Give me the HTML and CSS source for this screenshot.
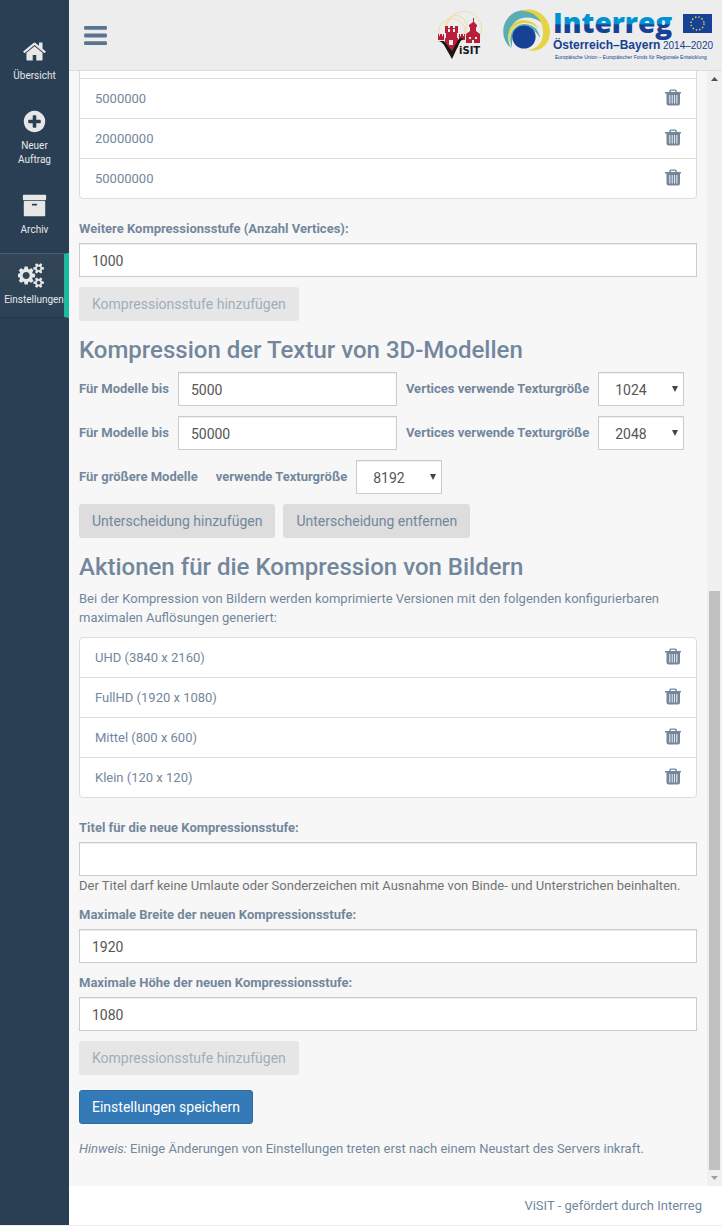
FILE: index.html
```html
<!DOCTYPE html>
<html lang="de">
<head>
<meta charset="utf-8">
<meta name="viewport" content="width=device-width, initial-scale=1">
<title>ViSIT - Einstellungen</title>
<link rel="stylesheet" href="styles.css">
</head>
<body>
<svg class="defs" aria-hidden="true">
  <symbol id="trash" viewBox="0 0 16 18">
    <path fill-rule="evenodd" d="M0 3h4L4.500 1.300Q4.800.4 5.800.4h4.400q1 0 1.300.9L12 3h4v1.600h-1V14.500q0 2-2 2H3.500q-2 0-2-2V4.600H0zM5.500 3h5L10 1.700H6zM4.400 6v8.500h.9V6zm2.400 0v8.500h.8V6zm2.300 0v8.500h.8V6zm2.300 0v8.500h.9V6z"/>
  </symbol>
</svg>
<div class="app">
  <nav class="sidebar">
    <a class="nav-item" href="#">
      <svg class="nav-icon" viewBox="0 0 1792 1792"><path d="M1472 992v480q0 26-19 45t-45 19h-384v-384h-256v384h-384q-26 0-45-19t-19-45v-480q0-1 .5-3t.5-3l575-474 575 474q1 2 1 6zm223-69l-62 74q-8 9-21 11h-3q-13 0-21-7l-692-577-692 577q-12 8-24 7-13-2-21-11l-62-74q-8-10-7-23.5t11-21.5l719-599q32-26 76-26t76 26l244 204v-195q0-14 9-23t23-9h192q14 0 23 9t9 23v408l219 182q10 8 11 21.5t-7 23.500z"/></svg>
      <span>Übersicht</span>
    </a>
    <a class="nav-item" href="#">
      <svg class="nav-icon" viewBox="0 0 1792 1792"><path d="M1344 960v-128q0-26-19-45t-45-19h-256v-256q0-26-19-45t-45-19h-128q-26 0-45 19t-19 45v256h-256q-26 0-45 19t-19 45v128q0 26 19 45t45 19h256v256q0 26 19 45t45 19h128q26 0 45-19t19-45v-256h256q26 0 45-19t19-45zm320-64q0 209-103 385.500t-279.500 279.500-385.500 103-385.500-103-279.500-279.500-103-385.500 103-385.500 279.500-279.500 385.500-103 385.500 103 279.500 279.500 103 385.500z"/></svg>
      <span>Neuer Auftrag</span>
    </a>
    <a class="nav-item" href="#">
      <svg class="nav-icon" viewBox="0 0 1792 1792"><path d="M1088 832q0-26-19-45t-45-19h-256q-26 0-45 19t-19 45 19 45 45 19h256q26 0 45-19t19-45zm576-192v960q0 26-19 45t-45 19h-1408q-26 0-45-19t-19-45v-960q0-26 19-45t45-19h1408q26 0 45 19t19 45zm64-448v256q0 26-19 45t-45 19h-1536q-26 0-45-19t-19-45v-256q0-26 19-45t45-19h1536q26 0 45 19t19 45z"/></svg>
      <span>Archiv</span>
    </a>
    <a class="nav-item active" href="#" aria-current="page">
      <svg class="nav-icon wide" viewBox="0 0 1920 1792"><path d="M832 896q0-106-75-181t-181-75-181 75-75 181 75 181 181 75 181-75 75-181zm768 512q0-52-38-90t-90-38-90 38-38 90q0 53 37.500 90.500t90.500 37.500 90.500-37.500 37.500-90.500zm0-1024q0-52-38-90t-90-38-90 38-38 90q0 53 37.500 90.500t90.500 37.500 90.500-37.500 37.500-90.500zm-384 421v185q0 10-7 19.500t-16 10.500l-155 24q-11 35-32 76 34 48 90 115 7 11 7 20 0 12-7 19-23 30-82.500 89.500t-78.500 59.500q-11 0-21-7l-115-90q-37 19-77 31-11 108-23 155-7 24-30 24h-186q-11 0-20-7.500t-10-17.500l-23-153q-34-10-75-31l-118 89q-7 7-20 7-11 0-21-8-144-133-144-160 0-9 7-19 10-14 41-53t47-61q-23-44-35-82l-152-24q-10-1-17-9.500t-7-19.500v-185q0-10 7-19.500t16-10.500l155-24q11-35 32-76-34-48-90-115-7-11-7-20 0-12 7-20 22-30 82-89t79-59q11 0 21 7l115 90q34-18 77-32 11-108 23-154 7-24 30-24h186q11 0 20 7.500t10 17.500l23 153q34 10 75 31l118-89q8-7 20-7 11 0 21 8 144 133 144 160 0 8-7 19-12 16-42 54t-45 60q23 48 34 82l152 23q10 2 17 10.500t7 19.500zm640 533v140q0 16-149 31-12 27-30 52 51 113 51 138 0 4-4 7-122 71-124 71-8 0-46-47t-52-68q-20 2-30 2t-30-2q-14 21-52 68t-46 47q-2 0-124-71-4-3-4-7 0-25 51-138-18-25-30-52-149-15-149-31v-140q0-16 149-31 13-29 30-52-51-113-51-138 0-4 4-7 4-2 35-20t59-34 30-16q8 0 46 46.500t52 67.500q20-2 30-2t30 2q51-71 92-112l6-2q4 0 124 70 4 3 4 7 0 25-51 138 17 23 30 52 149 15 149 31zm0-1024v140q0 16-149 31-12 27-30 52 51 113 51 138 0 4-4 7-122 71-124 71-8 0-46-47t-52-68q-20 2-30 2t-30-2q-14 21-52 68t-46 47q-2 0-124-71-4-3-4-7 0-25 51-138-18-25-30-52-149-15-149-31v-140q0-16 149-31 13-29 30-52-51-113-51-138 0-4 4-7 4-2 35-20t59-34 30-16q8 0 46 46.500t52 67.500q20-2 30-2t30 2q51-71 92-112l6-2q4 0 124 70 4 3 4 7 0 25-51 138 17 23 30 52 149 15 149 31z"/></svg>
      <span>Einstellungen</span>
    </a>
  </nav>

  <div class="page">
    <header class="topbar">
      <button class="menu-toggle" type="button" aria-label="Menü">
        <svg viewBox="0 0 1536 1280"><path d="M1536 1088v128q0 26-19 45t-45 19H64q-26 0-45-19t-19-45v-128q0-26 19-45t45-19h1408q26 0 45 19t19 45zm0-512v128q0 26-19 45t-45 19H64q-26 0-45-19T0 704V576q0-26 19-45t45-19h1408q26 0 45 19t19 45zm0-512v128q0 26-19 45t-45 19H64q-26 0-45-19T0 192V64q0-26 19-45T64 0h1408q26 0 45 19t19 45z"/></svg>
      </button>
      <div class="logos">
        <svg class="logo-visit" viewBox="0 0 50 54" role="img" aria-label="ViSIT">
          <g fill="none" stroke="#f0dda4" stroke-width="1">
            <circle cx="17" cy="24" r="13.500"/>
            <circle cx="29" cy="21" r="17.500"/>
            <circle cx="21" cy="18" r="10.500"/>
          </g>
          <path fill="#ededed" d="M2 34h46v20H2z"/>
          <path fill="#b81f3a" d="M10 18h3v2h2v-2h3v2h2v-2h3v7h-1v5h1v9l-6 5-7-6v-8h1v-5h-1z"/>
          <path fill="#b81f3a" d="M3 26h1v2h1v-2h2v2h1v-2h1v6H3zm21 0h1v2h1v-2h2v2h1v-2h1v6h-6z"/>
          <path fill="#b81f3a" d="M38 10h1v4l3 3v2h-1v4l4 3v9H31v-9l4-3v-4h-1v-2l4-3z"/>
          <path fill="#ededed" d="M13 21h2v3h-2zm5 0h2v3h-2zm-4 11h4v5h-4zm20-3h2v2h-2zm6 0h2v2h-2zm-3 3h2v3h-2z"/>
          <path fill="#161616" d="M3 33h6l8 10 6-11q1-2 6-2-3 2-5 6l-7 15-8-14q-3-4-6-4z"/>
          <text class="visit-word" x="24" y="46">iSIT</text>
        </svg>
        <svg class="logo-interreg" viewBox="0 0 211 54" role="img" aria-label="Interreg Österreich–Bayern 2014–2020">
          <defs>
            <linearGradient id="word" gradientUnits="userSpaceOnUse" x1="0" y1="4" x2="0" y2="32">
              <stop offset="0" stop-color="#0093d3"/><stop offset=".42" stop-color="#0093d3"/>
              <stop offset=".46" stop-color="#164194"/><stop offset="1" stop-color="#164194"/>
            </linearGradient>
          </defs>
          <path fill="#5badb4" d="M8 40C-3 31-2 14 9 6 20-2 38 3 42 19 36 9 21 6 12 14 5 21 3 31 8 40z"/>
          <path fill="#e5d343" d="M18 3C32-3 47 9 47 23 47 37 37 45 25 42 36 41 41 32 40 22 39 10 30 3 18 3z"/>
          <path fill="#e5d343" d="M9 40C2 28 6 13 20 12q12 0 17 11Q31 14 20 15C8 17 4 29 9 40z"/>
          <path fill="#5badb4" d="M9 40C4 26 11 16 22 16q13 1 15 14Q31 19 20 20 8 22 9 40z"/>
          <circle cx="21" cy="29" r="11.600" fill="#164194"/>
          <text class="ir-word" x="50" y="25" fill="url(#word)">Interreg</text>
          <path fill="#164194" d="M180 6h29v19h-29z"/>
          <circle cx="194.500" cy="15.500" r="6.500" fill="none" stroke="#d9cf45" stroke-width="1.500" stroke-dasharray="1.500 1.903"/>
          <text class="ir-region" x="50" y="41">Österreich–Bayern</text>
          <text class="ir-years" x="160" y="41">2014–2020</text>
          <text class="ir-sub" x="52" y="51">Europäische Union – Europäischer Fonds für Regionale Entwicklung</text>
        </svg>
      </div>
    </header>

    <div class="viewport">
      <main class="content">
        <ul class="list">
          <li></li>
          <li><span>5000000</span><button class="delete" type="button" aria-label="5000000 löschen"><svg><use href="#trash"/></svg></button></li>
          <li><span>20000000</span><button class="delete" type="button" aria-label="20000000 löschen"><svg><use href="#trash"/></svg></button></li>
          <li><span>50000000</span><button class="delete" type="button" aria-label="50000000 löschen"><svg><use href="#trash"/></svg></button></li>
        </ul>
        <div class="field">
          <label for="vertices">Weitere Kompressionsstufe (Anzahl Vertices):</label>
          <input class="control" id="vertices" type="text" value="1000">
        </div>
        <div class="actions"><button class="btn" type="button" disabled>Kompressionsstufe hinzufügen</button></div>

        <h2>Kompression der Textur von 3D-Modellen</h2>
        <div class="texture-row">
          <label for="m1">Für Modelle bis</label>
          <input class="control" id="m1" type="text" value="5000">
          <label for="t1">Vertices verwende Texturgröße</label>
          <div class="select"><select class="control" id="t1"><option>1024</option></select><svg viewBox="0 0 6 6"><path d="M0 0h6L3 6z"/></svg></div>
        </div>
        <div class="texture-row">
          <label for="m2">Für Modelle bis</label>
          <input class="control" id="m2" type="text" value="50000">
          <label for="t2">Vertices verwende Texturgröße</label>
          <div class="select"><select class="control" id="t2"><option>2048</option></select><svg viewBox="0 0 6 6"><path d="M0 0h6L3 6z"/></svg></div>
        </div>
        <div class="texture-row">
          <label class="larger" for="t3">Für größere Modelle</label>
          <label for="t3">verwende Texturgröße</label>
          <div class="select"><select class="control" id="t3"><option>8192</option></select><svg viewBox="0 0 6 6"><path d="M0 0h6L3 6z"/></svg></div>
        </div>
        <div class="actions">
          <button class="btn" type="button">Unterscheidung hinzufügen</button>
          <button class="btn" type="button">Unterscheidung entfernen</button>
        </div>

        <h2>Aktionen für die Kompression von Bildern</h2>
        <p class="intro">Bei der Kompression von Bildern werden komprimierte Versionen mit den folgenden konfigurierbaren maximalen Auflösungen generiert:</p>
        <ul class="list">
          <li><span>UHD (3840 x 2160)</span><button class="delete" type="button" aria-label="UHD löschen"><svg><use href="#trash"/></svg></button></li>
          <li><span>FullHD (1920 x 1080)</span><button class="delete" type="button" aria-label="FullHD löschen"><svg><use href="#trash"/></svg></button></li>
          <li><span>Mittel (800 x 600)</span><button class="delete" type="button" aria-label="Mittel löschen"><svg><use href="#trash"/></svg></button></li>
          <li><span>Klein (120 x 120)</span><button class="delete" type="button" aria-label="Klein löschen"><svg><use href="#trash"/></svg></button></li>
        </ul>
        <div class="field">
          <label for="title">Titel für die neue Kompressionsstufe:</label>
          <input class="control" id="title" type="text">
          <span class="help">Der Titel darf keine Umlaute oder Sonderzeichen mit Ausnahme von Binde- und Unterstrichen beinhalten.</span>
        </div>
        <div class="field">
          <label for="width">Maximale Breite der neuen Kompressionsstufe:</label>
          <input class="control" id="width" type="text" value="1920">
        </div>
        <div class="field">
          <label for="height">Maximale Höhe der neuen Kompressionsstufe:</label>
          <input class="control" id="height" type="text" value="1080">
        </div>
        <div class="actions"><button class="btn" type="button" disabled>Kompressionsstufe hinzufügen</button></div>
        <div class="actions save"><button class="btn primary" type="submit">Einstellungen speichern</button></div>
        <p class="note"><em>Hinweis:</em> Einige Änderungen von Einstellungen treten erst nach einem Neustart des Servers inkraft.</p>
      </main>
      <div class="scrollbar" aria-hidden="true">
        <svg class="arrow" viewBox="0 0 7 4"><path d="M0 4h7L3.500 0z"/></svg>
        <div class="track"><div class="thumb"></div></div>
        <svg class="arrow muted" viewBox="0 0 7 4"><path d="M0 0h7L3.500 4z"/></svg>
      </div>
    </div>

    <footer class="footer">ViSIT - gefördert durch Interreg</footer>
  </div>
</div>
</body>
</html>
```
FILE: styles.css
```css
* { box-sizing: border-box; }

body {
  margin: 0;
  background: #f7f7f7;
  color: #73879c;
  font: 400 13px/19px Roboto, "Liberation Sans", sans-serif;
}

.defs { display: none; }
svg { fill: currentColor; display: block; }
button, input, select { font-family: inherit; }

.app {
  display: flex;
  height: 100vh;
  border-bottom: 1px solid #ededed;
}

/* Sidebar */
.sidebar {
  flex: 0 0 69px;
  padding-top: 29px;
  background: #2a3f54;
}
.nav-item {
  display: flex;
  flex-direction: column;
  align-items: center;
  gap: 5px;
  margin-bottom: 5px;
  padding: 9px 4px 10px;
  border-top: 1px solid transparent;
  border-bottom: 1px solid transparent;
  color: #e7e7e7;
  font-size: 10px;
  line-height: 14px;
  text-align: center;
  text-decoration: none;
}
.nav-item.active {
  padding-right: 0;
  border-right: 5px solid #1abb9c;
  border-top-color: #4d5e6f;
  border-bottom-color: #22364a;
  background: linear-gradient(#334556, #2c4257);
  background-clip: padding-box;
}
.nav-icon { width: 25px; height: 25px; }
.nav-icon.wide { width: 27px; margin-right: 6px; }

/* Top bar */
.page {
  flex: 1;
  min-width: 0;
  display: flex;
  flex-direction: column;
}
.topbar {
  display: flex;
  align-items: center;
  justify-content: space-between;
  padding: 8px 8px 8px 15px;
  background: #ededed;
  border-bottom: 1px solid #d9dee4;
}
.menu-toggle {
  padding: 0;
  border: 0;
  background: none;
  color: #5a738e;
  cursor: pointer;
}
.menu-toggle svg { width: 23px; height: 19px; }
.logos { display: flex; gap: 18px; }
.logos svg { overflow: visible; }
.logo-visit { width: 50px; height: 54px; }
.logo-interreg { width: 211px; height: 54px; }
.visit-word { font: bold 10px "DejaVu Sans", sans-serif; fill: #161616; }
.ir-word { font: 800 28px "Open Sans", sans-serif; }
.ir-region { font: bold 12px "Liberation Sans", sans-serif; fill: #164194; }
.ir-years { font: 10px "Liberation Sans", sans-serif; fill: #164194; }
.ir-sub { font: 5px "Liberation Sans", sans-serif; fill: #164194; }

/* Scrolled pane */
.viewport {
  flex: 1;
  min-height: 0;
  display: flex;
  overflow: hidden;
}
.content {
  flex: 1;
  min-width: 0;
  display: flex;
  flex-direction: column;
  justify-content: flex-end;
  padding: 0 10px 28px;
}
.scrollbar {
  flex: 0 0 15px;
  display: flex;
  flex-direction: column;
  align-items: center;
  gap: 6px;
  padding: 6px 0;
  background: #f0f0f0;
}
.arrow { width: 7px; height: 4px; color: #505050; }
.arrow.muted { color: #a0a0a0; }
.track { flex: 1; display: flex; align-items: flex-end; }
.thumb { width: 11px; height: 53.5%; background: #c1c1c1; }

/* Lists */
.list {
  margin: 0 0 20px;
  padding: 0;
  list-style: none;
  background: #fff;
  border: 1px solid #ddd;
  border-radius: 4px;
}
.list li {
  display: flex;
  justify-content: space-between;
  align-items: flex-start;
  min-height: 39px;
  padding: 10px 15px;
}
.list li + li { border-top: 1px solid #ddd; }
.delete {
  padding: 0;
  border: 0;
  background: none;
  color: #73879c;
  cursor: pointer;
}
.delete svg { width: 16px; height: 18px; }

/* Forms */
.field { display: flex; flex-direction: column; margin-bottom: 10px; }
.field label { margin-bottom: 5px; }
label { font-weight: 700; }
.control {
  width: 100%;
  height: 34px;
  padding: 8px 12px 6px;
  border: 1px solid #ccc;
  border-radius: 0;
  background: #fff;
  box-shadow: inset 0 1px 1px rgba(0, 0, 0, .075);
  color: #555;
  font-size: 14px;
}
.help { color: #737373; }

.texture-row {
  display: flex;
  align-items: center;
  gap: 9px;
  margin-bottom: 10px;
}
.texture-row label { padding-bottom: 2px; white-space: nowrap; }
.texture-row > .control { flex: 0 1 219px; min-width: 0; }
.texture-row .larger { margin-right: 9px; }
.select { position: relative; flex: 0 0 86px; }
.select .control { appearance: none; padding-left: 16px; }
.select svg {
  position: absolute;
  top: 14px;
  right: 6px;
  width: 6px;
  height: 6px;
  color: #444;
  pointer-events: none;
}

.actions { display: flex; gap: 8px; }
.btn {
  height: 34px;
  padding: 6px 13px;
  border: 0;
  border-radius: 3px;
  background: #ddd;
  color: #73879c;
  font-size: 14px;
  cursor: pointer;
}
.btn:disabled { opacity: .65; }
.save { margin-top: 15px; }
.btn.primary {
  padding: 6px 12px;
  border: 1px solid #2e6da4;
  background: #337ab7;
  color: #fff;
}

h2 {
  margin: 16px 0 9px;
  font-size: 24px;
  font-weight: 500;
  line-height: 26px;
}
.intro { margin: 0 0 10px; }
.note { margin: 15px 0 0; }

.footer {
  padding: 10px 20px;
  background: #fff;
  text-align: right;
}
```
